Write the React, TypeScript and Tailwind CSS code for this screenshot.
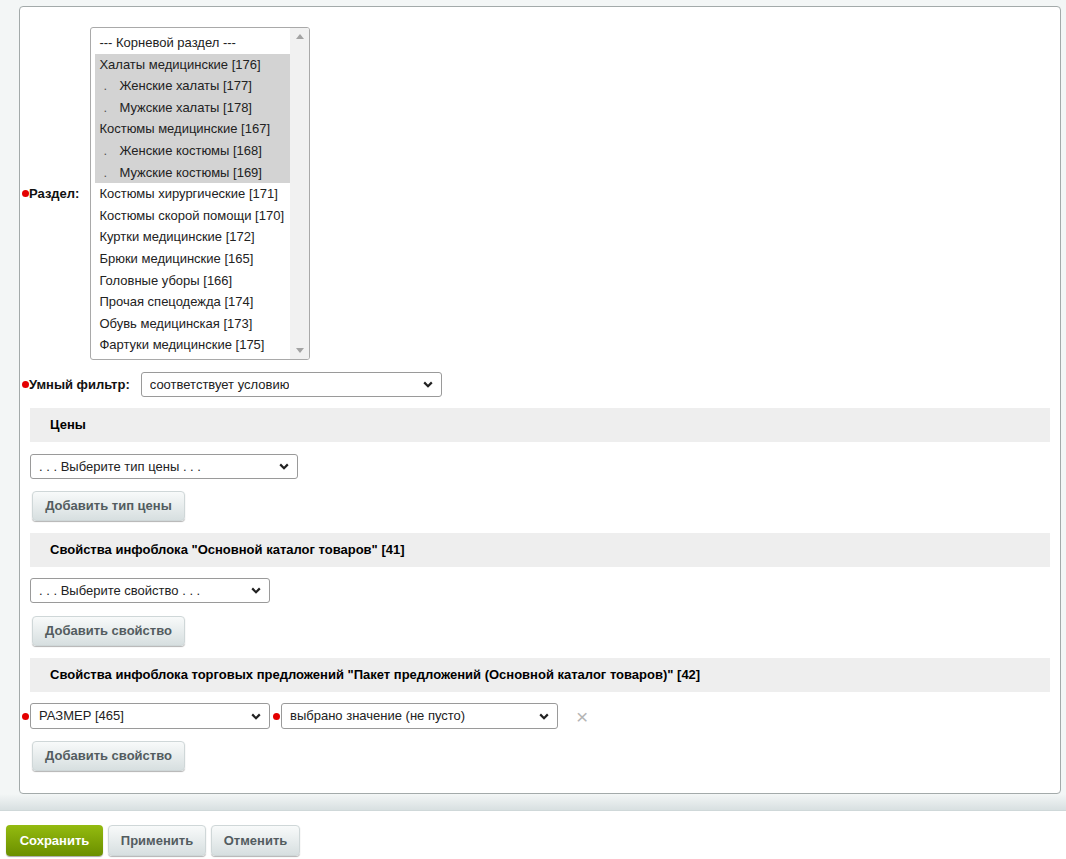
import React from 'react'

const sections = [
  { name: '--- Корневой раздел ---', level: 0, selected: false },
  { name: 'Халаты медицинские [176]', level: 0, selected: true },
  { name: 'Женские халаты [177]', level: 1, selected: true },
  { name: 'Мужские халаты [178]', level: 1, selected: true },
  { name: 'Костюмы медицинские [167]', level: 0, selected: true },
  { name: 'Женские костюмы [168]', level: 1, selected: true },
  { name: 'Мужские костюмы [169]', level: 1, selected: true },
  { name: 'Костюмы хирургические [171]', level: 0, selected: false },
  { name: 'Костюмы скорой помощи [170]', level: 0, selected: false },
  { name: 'Куртки медицинские [172]', level: 0, selected: false },
  { name: 'Брюки медицинские [165]', level: 0, selected: false },
  { name: 'Головные уборы [166]', level: 0, selected: false },
  { name: 'Прочая спецодежда [174]', level: 0, selected: false },
  { name: 'Обувь медицинская [173]', level: 0, selected: false },
  { name: 'Фартуки медицинские [175]', level: 0, selected: false },
]

function Dot() {
  return <span className="inline-block w-[7px] h-[7px] rounded-full bg-[#e40000] shrink-0" />
}

function Chevron() {
  return (
    <svg width="10" height="7" viewBox="0 0 10 7" className="shrink-0">
      <path d="M1.2 1.4 L5 5.2 L8.8 1.4" fill="none" stroke="#222" strokeWidth="2.2" />
    </svg>
  )
}

function FakeSelect({ value, width, height = 25 }: { value: string; width: number; height?: number }) {
  return (
    <div
      className="flex items-center justify-between bg-white border border-[#9a9a9a] rounded-[3px] pl-[8px] pr-[8px] text-[13px] text-[#222]"
      style={{ width, height }}
    >
      <span className="truncate">{value}</span>
      <Chevron />
    </div>
  )
}

function GrayButton({ label, width }: { label: string; width: number }) {
  return (
    <button
      className="h-[30px] rounded-[4px] bg-gradient-to-b from-[#f8fafa] to-[#d7dfe0] border border-[#cfd7d8] shadow-[0_1px_1px_rgba(0,0,0,0.3)] text-[13px] font-bold text-[#535c5f]"
      style={{ width }}
    >
      {label}
    </button>
  )
}

function SectionHeader({ title }: { title: string }) {
  return (
    <div className="mx-[10px] h-[34px] bg-[#eeeeee] flex items-center pl-[20px] text-[13px] font-bold text-[#000]">
      {title}
    </div>
  )
}

export default function App() {
  return (
    <div className="w-full h-[859px] flex flex-col font-['Liberation_Sans',Arial,sans-serif] text-[13px] text-[#000]">
      <div className="bg-[#f3f6f6] pt-[6px] pl-[19px] pr-[5px]">
        <div className="h-[788px] bg-white border border-[#a3aaaa] rounded-[4px] flex flex-col">
          {/* Раздел */}
          <div className="flex items-center pt-[20px] pl-[2px]">
            <div className="flex items-center font-bold text-[#111]">
              <Dot />
              <span>Раздел:</span>
            </div>
            <div className="ml-[11px] w-[220px] h-[333px] border border-[#a9a9a9] rounded-[3px] flex bg-white overflow-hidden">
              <div className="flex-1 pt-[4px] pl-[4px]">
                {sections.map(s => (
                  <div
                    key={s.name}
                    className={`h-[21.6px] flex items-center pl-[4px] text-[13px] text-[#222] whitespace-nowrap ${s.selected ? 'bg-[#d3d3d3]' : ''}`}
                  >
                    {s.level > 0 && <span className="inline-block w-[20px] pl-[4px] text-[#555]">.</span>}
                    {s.name}
                  </div>
                ))}
              </div>
              <div className="w-[19px] bg-[#f1f1f1] flex flex-col justify-between items-center py-[6px]">
                <svg width="8" height="5" viewBox="0 0 8 5">
                  <path d="M0 5 L4 0 L8 5 Z" fill="#a3a3a3" />
                </svg>
                <svg width="8" height="5" viewBox="0 0 8 5">
                  <path d="M0 0 L4 5 L8 0 Z" fill="#a3a3a3" />
                </svg>
              </div>
            </div>
          </div>

          {/* Умный фильтр */}
          <div className="flex items-center mt-[12px] pl-[2px]">
            <div className="flex items-center font-bold text-[#111]">
              <Dot />
              <span>Умный фильтр:</span>
            </div>
            <div className="ml-[11px]">
              <FakeSelect value="соответствует условию" width={301} />
            </div>
          </div>

          <div className="mt-[11px]">
            <SectionHeader title="Цены" />
          </div>
          <div className="mt-[12px] ml-[10px]">
            <FakeSelect value=". . . Выберите тип цены . . ." width={268} />
          </div>
          <div className="mt-[12px] ml-[12px]">
            <GrayButton label="Добавить тип цены" width={153} />
          </div>

          <div className="mt-[12px]">
            <SectionHeader title={'Свойства инфоблока "Основной каталог товаров" [41]'} />
          </div>
          <div className="mt-[11px] ml-[10px]">
            <FakeSelect value=". . . Выберите свойство . . ." width={240} />
          </div>
          <div className="mt-[13px] ml-[12px]">
            <GrayButton label="Добавить свойство" width={153} />
          </div>

          <div className="mt-[12px]">
            <SectionHeader title={'Свойства инфоблока торговых предложений "Пакет предложений (Основной каталог товаров)" [42]'} />
          </div>
          <div className="mt-[11px] flex items-center pl-[2px]">
            <Dot />
            <div className="ml-[1px]">
              <FakeSelect value="РАЗМЕР [465]" width={240} height={26} />
            </div>
            <div className="ml-[3px]">
              <Dot />
            </div>
            <div className="ml-[1px]">
              <FakeSelect value="выбрано значение (не пусто)" width={277} height={26} />
            </div>
            <span className="ml-[18px] text-[21px] leading-none text-[#b5b5b5]">×</span>
          </div>
          <div className="mt-[12px] ml-[12px]">
            <GrayButton label="Добавить свойство" width={153} />
          </div>
        </div>
      </div>

      <div className="h-[17px] bg-gradient-to-b from-[#f3f6f6] to-[#d8e0e1] border-b border-[#cfd8d9]" />

      <div className="flex-1 bg-white pt-[14px] pl-[6px] flex items-start gap-[5px]">
        <button className="w-[97px] h-[31px] rounded-[4px] bg-gradient-to-b from-[#94bb10] to-[#6b8f00] shadow-[0_1px_1px_rgba(0,0,0,0.35)] text-[13px] font-bold text-white">
          Сохранить
        </button>
        <button className="w-[98px] h-[31px] rounded-[4px] bg-gradient-to-b from-[#f8fafa] to-[#d7dfe0] border border-[#cfd7d8] shadow-[0_1px_1px_rgba(0,0,0,0.3)] text-[13px] font-bold text-[#535c5f]">
          Применить
        </button>
        <button className="w-[89px] h-[31px] rounded-[4px] bg-gradient-to-b from-[#f8fafa] to-[#d7dfe0] border border-[#cfd7d8] shadow-[0_1px_1px_rgba(0,0,0,0.3)] text-[13px] font-bold text-[#535c5f]">
          Отменить
        </button>
      </div>
    </div>
  )
}
